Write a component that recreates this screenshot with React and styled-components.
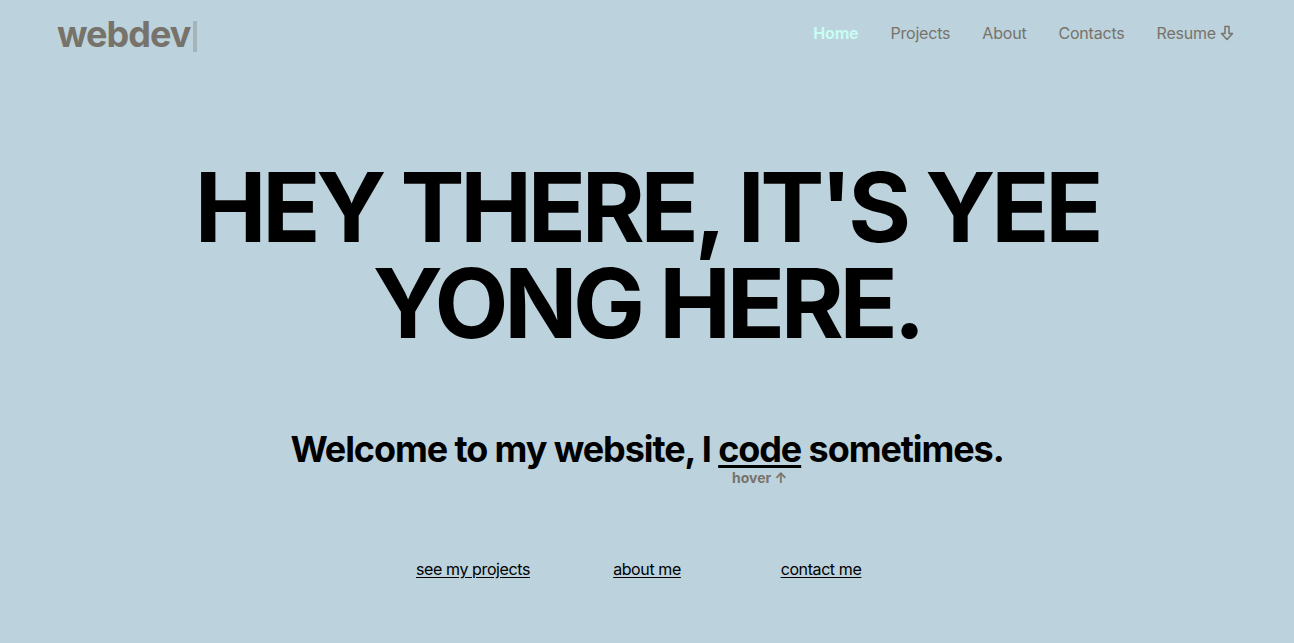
import React from "react";
import styled, { createGlobalStyle } from "styled-components";

const Global = createGlobalStyle`
  html, body {
    margin: 0;
    padding: 0;
    background: #bcd2dc;
  }
  body {
    font-family: Inter, "Noto Sans", sans-serif;
    color: #000;
  }
`;

const Page = styled.div`
  min-height: 643px;
  background: #bcd2dc;
  display: flex;
  flex-direction: column;
`;

const Header = styled.header`
  height: 66px;
  display: flex;
  align-items: center;
  justify-content: space-between;
  padding: 0 60px 0 57px;
  box-sizing: border-box;
`;

const Logo = styled.div`
  font-size: 36px;
  font-weight: 700;
  color: #77736b;
  letter-spacing: -1px;
  display: flex;
  align-items: center;
  line-height: 1;
  margin-top: 2px;
`;

const Cursor = styled.span`
  display: inline-block;
  width: 4px;
  height: 31px;
  background: #a4b4ba;
  margin-left: 3px;
  margin-top: 4px;
`;

const Nav = styled.nav`
  display: flex;
  align-items: center;
  gap: 32px;
`;

const NavItem = styled.a`
  font-size: 16px;
  font-weight: ${(p) => (p.$active ? 700 : 400)};
  color: ${(p) => (p.$active ? "#c8fcf4" : "#77736b")};
  letter-spacing: -0.2px;
  text-decoration: none;
  display: flex;
  align-items: center;
  gap: 4px;
`;

const Hero = styled.main`
  display: flex;
  flex-direction: column;
  align-items: center;
  text-align: center;
`;

const Title = styled.h1`
  margin: 93px 0 0;
  font-size: 96px;
  line-height: 96px;
  font-weight: 700;
  letter-spacing: -4.3px;
  white-space: nowrap;
`;

const Subtitle = styled.p`
  margin: 76px 0 0;
  font-size: 36px;
  line-height: 44px;
  font-weight: 700;
  letter-spacing: -1.1px;
`;

const CodeWord = styled.span`
  position: relative;
  text-decoration: underline;
  text-decoration-thickness: 3px;
  text-underline-offset: 3px;
`;

const HoverHint = styled.span`
  position: absolute;
  left: 50%;
  top: 100%;
  margin-top: -2px;
  transform: translateX(-50%);
  font-size: 14px;
  line-height: 17px;
  font-weight: 700;
  color: #77736b;
  letter-spacing: 0;
  white-space: nowrap;
  display: inline-block;
`;

const Links = styled.div`
  margin-top: 88px;
  display: grid;
  grid-template-columns: repeat(3, 174px);
  justify-items: center;
`;

const TextLink = styled.a`
  font-size: 16px;
  color: #000;
  letter-spacing: -0.4px;
  text-decoration: underline;
  text-underline-offset: 2px;
`;

function DownArrow() {
  return (
    <svg width="14" height="16" viewBox="0 0 14 16" fill="none" stroke="#77736b" strokeWidth="1.5" strokeLinejoin="round">
      <path d="M5 1.5 H9 V8.5 H12.5 L7 14.5 L1.5 8.5 H5 Z" />
    </svg>
  );
}

export default function App() {
  return (
    <>
      <Global />
      <Page>
        <Header>
          <Logo>
            webdev
            <Cursor />
          </Logo>
          <Nav>
            <NavItem $active href="#">Home</NavItem>
            <NavItem href="#">Projects</NavItem>
            <NavItem href="#">About</NavItem>
            <NavItem href="#">Contacts</NavItem>
            <NavItem href="#">
              Resume <DownArrow />
            </NavItem>
          </Nav>
        </Header>
        <Hero>
          <Title>
            HEY THERE, IT'S YEE
            <br />
            YONG HERE.
          </Title>
          <Subtitle>
            Welcome to my website, I{" "}
            <CodeWord>
              code
              <HoverHint>hover ↑</HoverHint>
            </CodeWord>{" "}
            sometimes.
          </Subtitle>
          <Links>
            <TextLink href="#">see my projects</TextLink>
            <TextLink href="#">about me</TextLink>
            <TextLink href="#">contact me</TextLink>
          </Links>
        </Hero>
      </Page>
    </>
  );
}
